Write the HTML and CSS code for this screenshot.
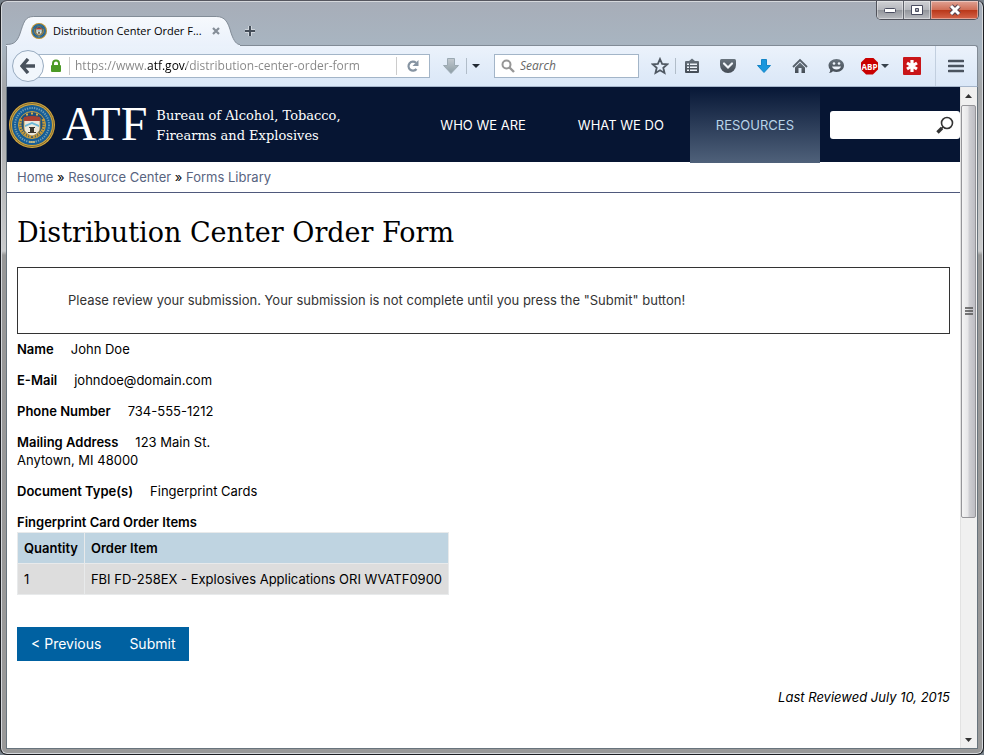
FILE: index.html
```html
<!DOCTYPE html>
<html lang="en">
<head>
    <meta charset="UTF-8">
    <meta name="viewport" content="width=device-width, initial-scale=1.0">
    <title>Distribution Center Order Form</title>
    <link rel="stylesheet" href="styles.css">
</head>
<body>
    <!-- shared drawings -->
    <svg class="defs" aria-hidden="true">
        <defs>
            <linearGradient id="tabFill" x1="0" y1="0" x2="0" y2="1">
                <stop offset="0" stop-color="#f6f9fd"/>
                <stop offset="1" stop-color="#eaf1fb"/>
            </linearGradient>
            <linearGradient id="grayFill" x1="0" y1="0" x2="0" y2="1">
                <stop offset="0" stop-color="#c3c9cf"/>
                <stop offset="1" stop-color="#8b9ca4"/>
            </linearGradient>
            <linearGradient id="darkFill" x1="0" y1="0" x2="0" y2="1">
                <stop offset="0" stop-color="#68737d"/>
                <stop offset="1" stop-color="#444c55"/>
            </linearGradient>
            <symbol id="seal" viewBox="0 0 46 46">
                <circle cx="23" cy="23" r="23" fill="#d5a73c"/>
                <circle cx="23" cy="23" r="21.5" fill="none" stroke="#806c35" stroke-width="1"/>
                <circle cx="23" cy="23" r="20" fill="#165d96"/>
                <circle cx="23" cy="23" r="17" fill="none" stroke="#6f9db5" stroke-width="2" stroke-dasharray="1.3 1.1"/>
                <circle cx="23" cy="23" r="13.5" fill="#1d4f7c" stroke="#caa344" stroke-width="1"/>
                <path d="M12 17c-3 9 1 16 11 18M34 17c3 9-1 16-11 18" fill="none" stroke="#c99b37" stroke-width="3" stroke-dasharray="2 .7"/>
                <path d="M15 16h16v10c0 4-4 7-8 8-4-1-8-4-8-8z" fill="#ece8dc" stroke="#b68b34" stroke-width=".8"/>
                <path d="M15 15q8-2 16 0v4H15z" fill="#a83f32"/>
                <path d="M16 23l7-3 7 3v2l-7-3-7 3z" fill="#6ab6d5"/>
                <path d="M20 25h6v1h-1v4h2v1h-8v-1h2v-4h-1z" fill="#3c3830"/>
                <path d="M17 12.5h2M22 11.5h2M27 12.5h2" stroke="#d9b14c" stroke-width="2"/>
                <path d="M20 40h6" stroke="#d8c27d" stroke-width="1.5"/>
            </symbol>
        </defs>
    </svg>

    <div class="window">
        <header class="title-bar">
            <div class="tab">
                <svg class="tab-shape" viewBox="0 0 236 30" preserveAspectRatio="none" aria-hidden="true">
                    <path d="M0 28.5C8 28.500 11 26 14 18C18 6 19 .5 28 .5H212C221 .5 224 6 227 17C230 26 233 28.500 236 28.500V30H0z" fill="url(#tabFill)"/>
                    <path d="M0 28.5C8 28.500 11 26 14 18C18 6 19 .5 28 .5H212C221 .5 224 6 227 17C230 26 233 28.500 236 28.500" fill="none" stroke="#818b96"/>
                </svg>
                <svg class="favicon" aria-hidden="true"><use href="#seal"/></svg>
                <span class="tab-title">Distribution Center Order F...</span>
                <button class="tab-close" type="button" aria-label="Close tab">
                    <svg width="8" height="8" viewBox="0 0 8 8"><path d="M1 1l6 6M7 1L1 7" stroke="#858e98" stroke-width="2.2"/></svg>
                </button>
            </div>
            <button class="new-tab" type="button" aria-label="New tab">
                <svg width="12" height="12" viewBox="0 0 12 12"><path d="M6 1v10M1 6h10" stroke="#f4f6f8" stroke-opacity=".5" stroke-width="4"/><path d="M6 1v10M1 6h10" stroke="#454e59" stroke-width="2"/></svg>
            </button>
            <div class="window-controls">
                <button class="control" type="button" aria-label="Minimize">
                    <svg width="14" height="8" viewBox="0 0 14 8"><rect x="1.500" y="2.500" width="11" height="4" rx="1" fill="#fff" stroke="#4a4d60"/></svg>
                </button>
                <button class="control" type="button" aria-label="Maximize">
                    <svg width="12" height="12" viewBox="0 0 12 12"><path d="M.5 1.500h11v9H.5zM4.500 4.500v3h3v-3z" fill="#fff" fill-rule="evenodd" stroke="#4a4d60"/></svg>
                </button>
                <button class="control control-close" type="button" aria-label="Close">
                    <svg width="14" height="12" viewBox="0 0 14 12"><path d="M3 2l8 8M11 2l-8 8" stroke="#55434f" stroke-width="5"/><path d="M3 2l8 8M11 2l-8 8" stroke="#fff" stroke-width="3"/></svg>
                </button>
            </div>
        </header>

        <div class="toolbar">
            <button class="back" type="button" aria-label="Back">
                <svg width="16" height="16" viewBox="0 0 16 16"><path d="M8 1L2 8l6 7M2 8h13" fill="none" stroke="#48515c" stroke-width="3.400"/></svg>
            </button>
            <div class="url-bar">
                <svg class="lock" width="12" height="14" viewBox="0 0 12 14"><path d="M3 7V4.500a3 3 0 0 1 6 0V7" fill="none" stroke="#4c9a26" stroke-width="2"/><rect x="1" y="6" width="10" height="7" rx="1" fill="#4c9a26"/></svg>
                <input class="url-input" type="text" aria-label="Address" value="https://www.atf.gov/distribution-center-order-form">
                <button class="reload" type="button" aria-label="Reload">
                    <svg width="14" height="14" viewBox="0 0 14 14"><path d="M10.500 10A4.500 4.500 0 1 1 10 3.800" fill="none" stroke="#8694a2" stroke-width="2.200"/><path d="M12.500 1v6h-6z" fill="#8694a2"/></svg>
                </button>
            </div>
            <button class="icon-button download" type="button" aria-label="Save video">
                <svg width="16" height="16" viewBox="0 0 16 16"><path d="M4.500.5h7v7h4L8 15.500.5 7.500h4z" fill="url(#grayFill)" stroke="#9ba9b2"/></svg>
            </button>
            <span class="divider"></span>
            <button class="icon-button drop" type="button" aria-label="Save options">
                <svg width="8" height="4" viewBox="0 0 8 4"><path d="M0 0h8L4 4z" fill="#222a33"/></svg>
            </button>
            <label class="quick-search">
                <svg width="14" height="14" viewBox="0 0 14 14"><circle cx="5.500" cy="5.500" r="4" fill="none" stroke="#969696" stroke-width="2"/><path d="M8.500 8.500l4.500 4.500" stroke="#969696" stroke-width="2.400"/></svg>
                <input type="search" placeholder="Search" aria-label="Search the web">
            </label>
            <button class="icon-button star" type="button" aria-label="Bookmark this page">
                <svg width="18" height="18" viewBox="0 0 18 18"><path d="M9 2l2.100 4.800 5.200.5-4 3.500 1.200 5.100L9 13.200l-4.500 2.700 1.200-5.100-4-3.500 5.200-.5z" fill="none" stroke="#4f5862" stroke-width="1.800"/></svg>
            </button>
            <span class="divider"></span>
            <button class="icon-button" type="button" aria-label="Bookmarks">
                <svg width="16" height="16" viewBox="0 0 16 16"><path d="M2 3h3l3-2.500L11 3h3q1 0 1 1v10q0 1-1 1H2q-1 0-1-1V4q0-1 1-1z" fill="url(#darkFill)"/><path d="M3 5.500h2v1.500H3zm3 0h7v1.500H6zM3 8.500h2V10H3zm3 0h7V10H6zM3 11.500h2V13H3zm3 0h7V13H6z" fill="#eef4fb"/></svg>
            </button>
            <button class="icon-button" type="button" aria-label="Save to Pocket">
                <svg width="16" height="16" viewBox="0 0 16 16"><path d="M1.500 1h13Q16 1 16 2.500V7a8 8 0 0 1-16 0V2.500Q0 1 1.500 1z" fill="url(#darkFill)"/><path d="M4 5.500l4 4 4-4" fill="none" stroke="#f1f5fa" stroke-width="2.200" stroke-linecap="round"/></svg>
            </button>
            <button class="icon-button" type="button" aria-label="Downloads">
                <svg width="16" height="16" viewBox="0 0 16 16"><path d="M5.500 1.500h5v6h4L8 14.500l-6.500-7h4z" fill="#1a97dd" stroke="#1485c6"/></svg>
            </button>
            <button class="icon-button" type="button" aria-label="Home">
                <svg width="16" height="16" viewBox="0 0 16 16"><path d="M1 9l7-7 7 7" fill="none" stroke="#56606a" stroke-width="1.800"/><path d="M3 9.500l5-5 5 5V15H9.500v-5h-3v5H3z" fill="url(#darkFill)"/></svg>
            </button>
            <button class="icon-button" type="button" aria-label="Start a conversation">
                <svg width="16" height="16" viewBox="0 0 16 16"><path d="M8.500 1C13 1 16 4 16 7.500S13 14 8.500 14q-2 0-3.500-.8Q3.500 15 1 15q1.500-1.500 1.200-3.500Q.5 10 .5 7.500C.5 4 4 1 8.500 1z" fill="url(#darkFill)"/><circle cx="6" cy="5.500" r="1.300" fill="#eef4fb"/><circle cx="11" cy="5.500" r="1.300" fill="#eef4fb"/><path d="M4 8.500h9q-1 3-4.500 3T4 8.500z" fill="#eef4fb"/></svg>
            </button>
            <button class="icon-button adblock" type="button" aria-label="Adblock Plus">
                <span class="abp">ABP</span>
                <svg width="8" height="4" viewBox="0 0 8 4"><path d="M0 0h8L4 4z" fill="#38424c"/></svg>
            </button>
            <button class="icon-button" type="button" aria-label="LastPass">
                <svg width="18" height="18" viewBox="0 0 18 18"><rect width="18" height="18" rx="1" fill="#c91518"/><path d="M9 3v12M4 6l10 6M14 6L4 12" stroke="#fff" stroke-width="3.200"/></svg>
            </button>
            <button class="menu" type="button" aria-label="Open menu">
                <svg width="16" height="14" viewBox="0 0 16 14"><path d="M1 2h14M1 7h14M1 12h14" stroke="#4b545f" stroke-width="2.600" stroke-linecap="round"/></svg>
            </button>
        </div>

        <div class="viewport">
            <div class="page">
                <header class="site-header">
                    <a class="brand" href="#">
                        <svg class="brand-seal" aria-hidden="true"><use href="#seal"/></svg>
                        <span class="brand-name">ATF</span>
                        <span class="brand-text">Bureau of Alcohol, Tobacco,<br>Firearms and Explosives</span>
                    </a>
                    <nav class="site-nav">
                        <a href="#">WHO WE ARE</a>
                        <a href="#">WHAT WE DO</a>
                        <a class="active" href="#">RESOURCES</a>
                    </nav>
                    <form class="site-search">
                        <input type="text" aria-label="Search ATF">
                        <button type="submit" aria-label="Search">
                            <svg width="18" height="18" viewBox="0 0 18 18"><circle cx="11" cy="7" r="5.500" fill="none" stroke="#333" stroke-width="1.600"/><path d="M7 11l-1.500 1.500" stroke="#333" stroke-width="1.600"/><path d="M6 12l-4.500 4.500" stroke="#333" stroke-width="3.400"/></svg>
                        </button>
                    </form>
                </header>

                <nav class="breadcrumb" aria-label="Breadcrumb">
                    <a href="#">Home</a> » <a href="#">Resource Center</a> » <a href="#">Forms Library</a>
                </nav>

                <main class="content">
                    <h1>Distribution Center Order Form</h1>
                    <div class="notice">Please review your submission. Your submission is not complete until you press the "Submit" button!</div>

                    <p class="field"><strong>Name</strong>John Doe</p>
                    <p class="field"><strong>E-Mail</strong>johndoe@domain.com</p>
                    <p class="field"><strong>Phone Number</strong>734-555-1212</p>
                    <p class="field"><strong>Mailing Address</strong>123 Main St.<br>Anytown, MI 48000</p>
                    <p class="field"><strong>Document Type(s)</strong>Fingerprint Cards</p>

                    <table class="order-items">
                        <caption>Fingerprint Card Order Items</caption>
                        <thead>
                            <tr><th scope="col">Quantity</th><th scope="col">Order Item</th></tr>
                        </thead>
                        <tbody>
                            <tr><td>1</td><td>FBI FD-258EX - Explosives Applications ORI WVATF0900</td></tr>
                        </tbody>
                    </table>

                    <form class="actions">
                        <button type="button">&lt; Previous</button><button type="submit">Submit</button>
                    </form>

                    <p class="reviewed">Last Reviewed July 10, 2015</p>
                </main>
            </div>

            <div class="scrollbar" aria-hidden="true">
                <svg class="scroll-arrow" width="15" height="18" viewBox="0 0 15 18"><path d="M4 11l3.500-4L11 11z" fill="#333"/></svg>
                <div class="thumb">
                    <svg width="8" height="9" viewBox="0 0 8 9"><path d="M0 1h8M0 4h8M0 7h8" stroke="#505050" stroke-width="1.400"/></svg>
                </div>
                <div class="track"></div>
                <svg class="scroll-arrow" width="15" height="18" viewBox="0 0 15 18"><path d="M4 8h7l-3.500 4z" fill="#333"/></svg>
            </div>
        </div>
    </div>
</body>
</html>
```
FILE: styles.css
```css
* {
    margin: 0;
    padding: 0;
    box-sizing: border-box;
}

body {
    font-family: 'Inter', 'Liberation Sans', sans-serif;
    font-size: 13px;
    line-height: 18px;
    color: #000;
    background: #77818a;
}

button, input {
    font: inherit;
    border: none;
    background: none;
}

a { text-decoration: none; }

svg { display: block; flex: none; }

.defs {
    position: absolute;
    width: 0;
    height: 0;
}

/* Browser window */
.window {
    min-height: 100vh;
    display: flex;
    flex-direction: column;
    padding: 0 5px 5px;
    border: 1px solid #1c1e22;
    border-top-color: #55565f;
    border-radius: 7px;
    background: linear-gradient(to bottom, #a7adb8 0, #a8b5c1 45px, #a4a6a8 90px, #c9cacb 250px, #989898 254px, #999 100%);
    box-shadow: inset 0 0 0 1px #d5d8dc;
}

.title-bar {
    height: 44px;
    display: flex;
    align-items: flex-end;
}

.tab {
    position: relative;
    width: 234px;
    height: 30px;
    margin-bottom: -1px;
    padding: 0 18px 0 25px;
    display: flex;
    align-items: center;
    font-family: 'Open Sans', 'Noto Sans', sans-serif;
    font-size: 11px;
}

.tab-shape {
    position: absolute;
    inset: 0;
    width: 100%;
    height: 100%;
}

.favicon {
    position: relative;
    width: 16px;
    height: 16px;
    margin-right: 6px;
}

.tab-title {
    position: relative;
    flex: 1;
    min-width: 0;
    white-space: nowrap;
}

.tab-close {
    position: relative;
    padding: 4px 2px;
}

.new-tab { padding: 8px 4px; }

.window-controls {
    align-self: flex-start;
    display: flex;
    margin-left: auto;
    margin-right: -1px;
    border: 1px solid #50525b;
    border-top: none;
    border-radius: 0 0 5px 5px;
    overflow: hidden;
}

.control {
    width: 27px;
    height: 18px;
    display: flex;
    align-items: center;
    justify-content: center;
    border-right: 1px solid #60636b;
    background: linear-gradient(to bottom, #d0d1d5, #b4b6bc 50%, #92959b 51%, #b9bbc0);
    box-shadow: inset 0 0 0 1px rgba(255,255,255,0.4);
}

.control-close {
    width: 47px;
    border-right: none;
    background: linear-gradient(to bottom, #e0a294, #cf6d55 50%, #b93719 51%, #d5654b);
}

.toolbar {
    height: 42px;
    display: flex;
    align-items: center;
    padding: 0 5px;
    border: 1px solid #818b96;
    border-bottom-color: #a6b6cb;
    border-radius: 0 3px 0 0;
    background: linear-gradient(to bottom, #ebf2fb, #dae7f7);
    font-family: 'Open Sans', 'Noto Sans', sans-serif;
    font-size: 12px;
}

.back {
    position: relative;
    z-index: 1;
    width: 32px;
    height: 32px;
    margin-right: -7px;
    display: flex;
    align-items: center;
    justify-content: center;
    flex: none;
    border: 1px solid #98abc0;
    border-radius: 50%;
    background: #f1f6fc;
}

.url-bar {
    flex: 1;
    height: 24px;
    display: flex;
    align-items: center;
    padding-left: 12px;
    border: 1px solid #a3b5c8;
    background: #fff;
}

.url-input {
    flex: 1;
    min-width: 0;
    height: 18px;
    margin-left: 7px;
    padding-left: 5px;
    border-left: 1px solid #ccc;
    color: #858585;
}

/* the host name is darker than the rest of the address */
.url-input {
    background: linear-gradient(to right, #858585 76px, #000 76px, #000 116px, #858585 116px);
    -webkit-background-clip: text;
    background-clip: text;
    -webkit-text-fill-color: transparent;
}

.reload {
    height: 18px;
    padding: 0 9px;
    border-left: 1px solid #ccc;
}

.icon-button {
    width: 36px;
    height: 28px;
    display: flex;
    align-items: center;
    justify-content: center;
    flex: none;
}

.download { margin-left: 3px; }
.drop { width: 22px; }
.star { margin-left: 3px; }

.download, .star { margin-right: -3px; }

.divider {
    width: 1px;
    height: 16px;
    margin-right: -2px;
    background: #b1bdc9;
}

.quick-search {
    width: 145px;
    height: 24px;
    margin-left: 7px;
    display: flex;
    align-items: center;
    gap: 5px;
    padding: 0 6px;
    border: 1px solid #a3b5c8;
    background: #fff;
}

.quick-search input {
    flex: 1;
    min-width: 0;
    outline: none;
}

.quick-search input::placeholder {
    color: #666;
    font-style: italic;
}

.adblock {
    width: 40px;
    gap: 3px;
    padding-left: 2px;
}

.abp {
    width: 17px;
    height: 17px;
    clip-path: polygon(30% 0, 70% 0, 100% 30%, 100% 70%, 70% 100%, 30% 100%, 0 70%, 0 30%);
    background: #c90000;
    color: #fff;
    font-family: 'Open Sans', sans-serif;
    font-size: 8px;
    font-weight: 700;
    line-height: 17px;
    text-align: center;
}

.menu {
    height: 40px;
    margin-left: 5px;
    padding: 0 8px 0 12px;
    border-left: 1px solid #c2cfdf;
}

/* Page */
.viewport {
    flex: 1;
    display: flex;
    border: 1px solid #68747d;
    border-top: none;
    background: #fff;
}

.page {
    flex: 1;
    min-width: 0;
}

.site-header {
    height: 75px;
    display: flex;
    align-items: center;
    background: #061533;
}

.brand {
    display: flex;
    align-items: center;
    padding-left: 2px;
    color: #fff;
}

.brand-seal {
    width: 46px;
    height: 46px;
    margin-right: 7px;
}

.brand-name {
    margin-right: 9px;
    padding-bottom: 2px;
    font-family: 'Liberation Serif', serif;
    font-size: 48px;
    line-height: 48px;
}

.brand-text {
    padding-top: 2px;
    font-family: 'DejaVu Serif', serif;
    font-size: 13px;
    line-height: 20px;
    white-space: nowrap;
}

.site-nav {
    align-self: stretch;
    display: flex;
    margin-left: auto;
}

.site-nav a {
    height: 76px;
    padding: 0 26px;
    color: #fff;
    line-height: 77px;
    white-space: nowrap;
}

.site-nav .active {
    background: linear-gradient(to bottom, #071736, #4f617a);
    color: #b8d4e8;
}

.site-search {
    width: 130px;
    height: 28px;
    margin-left: 10px;
    display: flex;
    align-items: center;
    border-radius: 3px;
    background: #fff;
}

.site-search input {
    flex: 1;
    min-width: 0;
    height: 28px;
    padding-left: 6px;
}

.site-search button { padding: 0 6px; }

.breadcrumb {
    padding: 6px 10px;
    border-bottom: 1px solid #4f597c;
}

.breadcrumb a { color: #58647f; }

.content { padding: 22px 10px 40px; }

h1 {
    margin-bottom: 16px;
    font-family: 'DejaVu Serif', serif;
    font-size: 27px;
    font-weight: 400;
    line-height: 36px;
}

.notice {
    margin-bottom: 6px;
    padding: 24px 50px;
    border: 1px solid #333;
    color: #333;
    line-height: 17px;
}

.field { margin-bottom: 13px; }

.field strong {
    margin-right: 17px;
    font-weight: 600;
}

.order-items { border-collapse: collapse; }

.order-items caption {
    padding-bottom: 1px;
    font-weight: 600;
    text-align: left;
}

.order-items th, .order-items td {
    padding: 6px;
    border: 1px solid #e8eaeb;
    text-align: left;
}

.order-items th {
    background: #bfd4e1;
    font-weight: 600;
}

.order-items td { background: #ddd; }

.actions {
    display: flex;
    margin-top: 32px;
}

.actions button {
    height: 34px;
    padding: 0 14px;
    background: #0061a1;
    color: #fff;
    font-size: 14px;
}

.reviewed {
    margin-top: 27px;
    font-style: italic;
    text-align: right;
}

/* Scrollbar */
.scrollbar {
    width: 17px;
    display: flex;
    flex-direction: column;
    border-left: 1px solid #e2e2e2;
    background: #f0f0f0;
}

.thumb {
    flex: 412;
    margin-right: 1px;
    display: flex;
    align-items: center;
    justify-content: center;
    border: 1px solid #959599;
    border-radius: 2px;
    background: linear-gradient(to right, #f4f4f4, #e6e6e8 45%, #cfcfd3 55%, #bdbdc3);
}

.track { flex: 213; }
```
